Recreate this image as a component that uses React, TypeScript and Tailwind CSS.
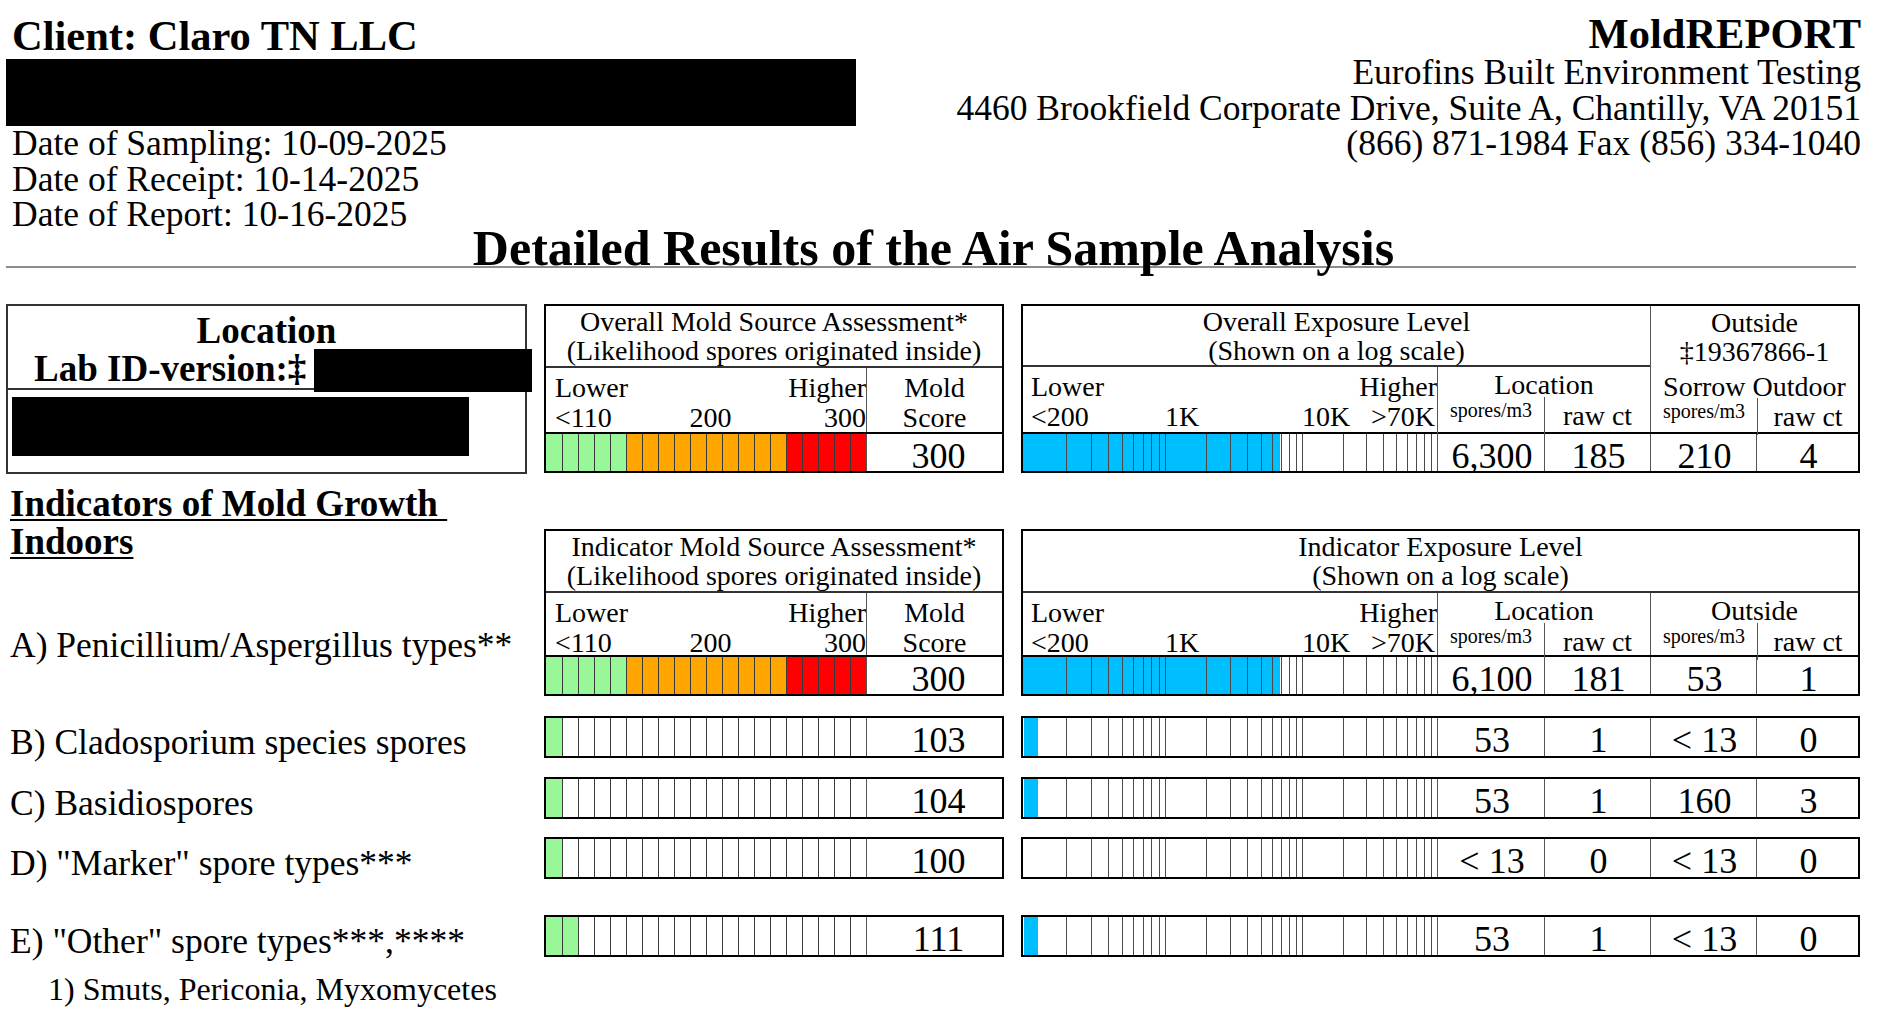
import React from 'react'

const serif = "font-['Liberation_Serif','Times_New_Roman',serif]"

// log scale: 100 -> 1K -> 10K -> 100K, three decades of slightly different width
const DECADES: [number, number][] = [
  [0, 142],
  [142, 279],
  [279, 414],
]
const GRID = DECADES.flatMap(([s, e]) =>
  [2, 3, 4, 5, 6, 7, 8, 9, 10].map((k) => Math.round(s + (e - s) * Math.log10(k)) + 0.5)
).filter((x) => x < 413)

function LogBar({ fill, h, from = 0 }: { fill: number; h: number; from?: number }) {
  return (
    <svg width={414} height={h} className="block shrink-0">
      {fill > 0 && <rect x={from} y={0} width={fill} height={h} fill="#00bfff" />}
      {GRID.map((x, i) => (
        <line key={i} x1={x} x2={x} y1={0} y2={h} stroke="#4a4a4a" strokeWidth={1} />
      ))}
    </svg>
  )
}

function MoldBar({ green = 0, full = false }: { green?: number; full?: boolean }) {
  return (
    <div className="flex h-full w-[320px] shrink-0">
      {Array.from({ length: 20 }).map((_, i) => {
        let color = 'bg-white'
        if (full) color = i < 5 ? 'bg-[#98f898]' : i < 15 ? 'bg-[#ffa500]' : 'bg-[#ff0000]'
        else if (i < green) color = 'bg-[#98f898]'
        return (
          <div
            key={i}
            className={`h-full w-[16px] ${color} ${i > 0 ? 'border-l border-[#3a3a3a]' : ''}`}
          />
        )
      })}
    </div>
  )
}

function ValCells({ vals }: { vals: string[] }) {
  const widths = ['w-[107px]', 'w-[106px]', 'w-[106px]', 'flex-1']
  return (
    <>
      {vals.map((v, i) => (
        <div
          key={i}
          className={`${widths[i]} border-l border-[#555] pl-[2px] text-center text-[36px] leading-[44px]`}
        >
          {v}
        </div>
      ))}
    </>
  )
}

function ScaleLabels() {
  return (
    <div className="w-[414px] shrink-0 pt-[5px] text-[28px] leading-[30px]">
      <div className="flex justify-between pl-[8px]">
        <span>Lower</span>
        <span>Higher</span>
      </div>
      <div className="flex">
        <div className="w-[142px] pl-[8px]">&lt;200</div>
        <div className="w-[137px]">1K</div>
        <div className="flex flex-1 justify-between pr-[2px]">
          <span>10K</span>
          <span>&gt;70K</span>
        </div>
      </div>
    </div>
  )
}

function SubLabels({ rawW }: { rawW: string }) {
  return (
    <div className="flex flex-1">
      <div className="w-[106px] text-center text-[20px] leading-[26px]">spores/m3</div>
      <div className={`${rawW} border-l border-[#555] text-center text-[28px] leading-[37px]`}>raw ct</div>
    </div>
  )
}

function ColLabels({ title, w }: { title: string; w: string }) {
  return (
    <div className={`flex ${w} flex-col border-l border-[#555]`}>
      <div className="h-[30px] text-center text-[28px] leading-[36px]">{title}</div>
      <SubLabels rawW="flex-1" />
    </div>
  )
}

function MoldBox({ title, labelsH, score }: { title: string; labelsH: string; score: string }) {
  return (
    <div className="w-[460px] shrink-0 border-2 border-black">
      <div className="h-[62px] border-b-2 border-[#333] pt-[1px] text-center text-[28px] leading-[29px]">
        <div>{title}</div>
        <div>(Likelihood spores originated inside)</div>
      </div>
      <div className={`flex ${labelsH}`}>
        <div className="w-[320px] pt-[5px] pl-[9px] text-[28px] leading-[30px]">
          <div className="flex justify-between">
            <span>Lower</span>
            <span>Higher</span>
          </div>
          <div className="grid grid-cols-3">
            <span>&lt;110</span>
            <span className="text-center">200</span>
            <span className="text-right">300</span>
          </div>
        </div>
        <div className="flex-1 border-l border-[#555] pt-[5px] text-center text-[28px] leading-[30px]">
          <div>Mold</div>
          <div>Score</div>
        </div>
      </div>
      <div className="flex h-[39px] border-t-2 border-black">
        <MoldBar full />
        <div className="flex-1 border-l border-[#555] pl-[8px] text-center text-[36px] leading-[44px]">{score}</div>
      </div>
    </div>
  )
}

function OverallExposure() {
  return (
    <div className="ml-[17px] w-[839px] shrink-0 border-2 border-black">
      <div className="flex h-[126px]">
        <div className="flex w-[627px] flex-col">
          <div className="h-[62px] border-b-2 border-[#333] pt-[1px] text-center text-[28px] leading-[29px]">
            <div>Overall Exposure Level</div>
            <div>(Shown on a log scale)</div>
          </div>
          <div className="flex flex-1">
            <ScaleLabels />
            <ColLabels title="Location" w="w-[213px]" />
          </div>
        </div>
        <div className="flex flex-1 flex-col border-l border-[#555] text-center">
          <div className="pt-[2px] text-[28px] leading-[29px]">
            <div>Outside</div>
            <div>‡19367866-1</div>
            <div className="mt-[6px] h-[26px]">Sorrow Outdoor</div>
          </div>
          <SubLabels rawW="flex-1" />
        </div>
      </div>
      <div className="flex h-[39px] border-t-2 border-black">
        <LogBar fill={257} h={37} />
        <ValCells vals={['6,300', '185', '210', '4']} />
      </div>
    </div>
  )
}

function IndicatorExposure() {
  return (
    <div className="ml-[17px] w-[839px] shrink-0 border-2 border-black">
      <div className="h-[62px] border-b-2 border-[#333] pt-[1px] text-center text-[28px] leading-[29px]">
        <div>Indicator Exposure Level</div>
        <div>(Shown on a log scale)</div>
      </div>
      <div className="flex h-[62px]">
        <ScaleLabels />
        <ColLabels title="Location" w="w-[213px]" />
        <ColLabels title="Outside" w="flex-1" />
      </div>
      <div className="flex h-[39px] border-t-2 border-black">
        <LogBar fill={257} h={37} />
        <ValCells vals={['6,100', '181', '53', '1']} />
      </div>
    </div>
  )
}

const rows = [
  { label: 'B) Cladosporium species spores', green: 1, score: '103', fill: 14, vals: ['53', '1', '< 13', '0'], mt: 'mt-[20px]' },
  { label: 'C) Basidiospores', green: 1, score: '104', fill: 14, vals: ['53', '1', '160', '3'], mt: 'mt-[19px]' },
  { label: 'D) "Marker" spore types***', green: 1, score: '100', fill: 0, vals: ['< 13', '0', '< 13', '0'], mt: 'mt-[18px]' },
  { label: 'E) "Other" spore types***,****', green: 2, score: '111', fill: 14, vals: ['53', '1', '< 13', '0'], mt: 'mt-[36px]' },
]

function ResultRow({ row }: { row: (typeof rows)[number] }) {
  return (
    <div className={`flex ${row.mt}`}>
      <div className="h-[42px] w-[538px] shrink-0 pt-[5px] pl-[4px] text-[35.5px] leading-[42px]">{row.label}</div>
      <div className="flex h-[42px] w-[460px] shrink-0 border-2 border-black">
        <MoldBar green={row.green} />
        <div className="flex-1 border-l border-[#555] pl-[8px] text-center text-[36px] leading-[44px]">{row.score}</div>
      </div>
      <div className="ml-[17px] flex h-[42px] w-[839px] shrink-0 border-2 border-black">
        <LogBar fill={row.fill} from={1} h={38} />
        <ValCells vals={row.vals} />
      </div>
    </div>
  )
}

export default function App() {
  return (
    <div className={`h-[1030px] w-[1882px] overflow-hidden bg-white pr-[21px] pl-[6px] text-black ${serif}`}>
      {/* report header */}
      <div className="flex items-start justify-between">
        <div className="pt-[15px]">
          <div className="pl-[6px] text-[42.5px] leading-[42px] font-bold">Client: Claro TN LLC</div>
          <div className="mt-[2px] h-[67px] w-[850px] bg-black" />
          <div className="pl-[6px] text-[35.5px] leading-[35.5px]">
            <div>Date of Sampling: 10-09-2025</div>
            <div>Date of Receipt: 10-14-2025</div>
            <div>Date of Report: 10-16-2025</div>
          </div>
        </div>
        <div className="pt-[13px] text-right">
          <div className="text-[42.5px] leading-[42px] font-bold">MoldREPORT</div>
          <div className="text-[35.5px] leading-[35.5px]">
            <div>Eurofins Built Environment Testing</div>
            <div>4460 Brookfield Corporate Drive, Suite A, Chantilly, VA 20151</div>
            <div>(866) 871-1984 Fax (856) 334-1040</div>
          </div>
        </div>
      </div>

      <h1 className="-mt-[5px] text-center text-[50px] leading-[40px] font-bold">
        Detailed Results of the Air Sample Analysis
      </h1>
      <div className="-mt-[2px] h-[2px] w-[1850px] bg-[#8c8c8c]" />

      {/* overall */}
      <div className="mt-[36px] flex items-start">
        <div className="relative h-[170px] w-[521px] shrink-0 border-2 border-[#333]">
          <div className="h-[84px] border-b-2 border-[#333] pt-[6px] text-[37px] leading-[38px] font-bold">
            <div className="text-center">Location</div>
            <div className="pl-[26px]">Lab ID-version:‡</div>
          </div>
          <div className="pt-[7px] pl-[4px]">
            <div className="h-[59px] w-[457px] bg-black" />
          </div>
          <div className="absolute top-[43px] left-[306px] h-[43px] w-[218px] bg-black" />
        </div>
        <div className="ml-[17px]">
          <MoldBox title="Overall Mold Source Assessment*" labelsH="h-[64px]" score="300" />
        </div>
        <OverallExposure />
      </div>

      {/* indicators */}
      <div className="mt-[11px] flex items-start">
        <div className="w-[538px] shrink-0 pl-[4px]">
          <div className="text-[37px] leading-[38px] font-bold underline decoration-2 underline-offset-[3px]">
            <div>Indicators of Mold Growth&nbsp;</div>
            <div>Indoors</div>
          </div>
          <div className="mt-[66px] text-[35.5px] leading-[36px]">A) Penicillium/Aspergillus types**</div>
        </div>
        <div className="mt-[44px]">
          <MoldBox title="Indicator Mold Source Assessment*" labelsH="h-[62px]" score="300" />
        </div>
        <div className="mt-[44px]">
          <IndicatorExposure />
        </div>
      </div>

      {rows.map((r) => (
        <ResultRow key={r.label} row={r} />
      ))}

      <div className="mt-[16px] pl-[42px] text-[32px] leading-[32px]">1) Smuts, Periconia, Myxomycetes</div>
    </div>
  )
}
